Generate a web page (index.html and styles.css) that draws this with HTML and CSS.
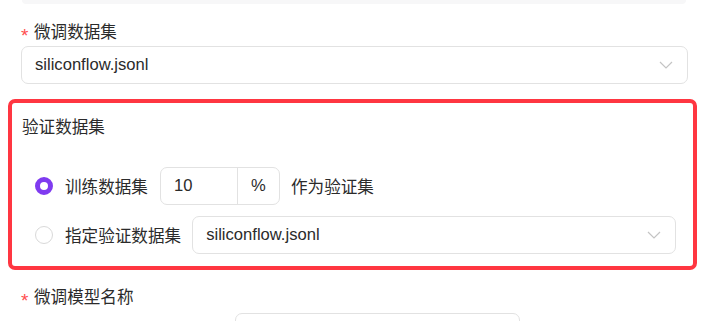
FILE: index.html
```html
<!DOCTYPE html>
<html lang="zh-CN">
<head>
  <meta charset="UTF-8" />
  <meta name="viewport" content="width=device-width, initial-scale=1.0" />
  <title>微调</title>
  <link rel="stylesheet" href="styles.css">
</head>
<body>
  <div class="top-strip"></div>

  <div class="field">
    <div class="label"><span class="req">*</span>微调数据集</div>
    <div class="select">
      <span>siliconflow.jsonl</span>
      <svg class="chev" width="14" height="8" viewBox="0 0 14 8"><polyline points="1,1 7,7 13,1" fill="none" stroke="#c4c4c4" stroke-width="1.2"/></svg>
    </div>
  </div>

  <div class="mark">
    <div class="label plain">验证数据集</div>
    <div class="row first">
      <span class="radio checked"></span>
      <span class="opt">训练数据集</span>
      <div class="group">
        <span class="num">10</span>
        <span class="unit">%</span>
      </div>
      <span class="opt after">作为验证集</span>
    </div>
    <div class="row">
      <span class="radio"></span>
      <span class="opt">指定验证数据集</span>
      <div class="select grow">
        <span>siliconflow.jsonl</span>
        <svg class="chev" width="14" height="8" viewBox="0 0 14 8"><polyline points="1,1 7,7 13,1" fill="none" stroke="#c4c4c4" stroke-width="1.2"/></svg>
      </div>
    </div>
  </div>

  <div class="field">
    <div class="label lower"><span class="req">*</span>微调模型名称</div>
    <div class="name-input"></div>
  </div>
</body>
</html>
```

FILE: styles.css
```css
body {
  margin: 0;
  height: 321px;
  background: #fff;
  color: #2b2b2b;
  font-family: "Liberation Sans", "Noto Sans CJK SC", sans-serif;
  font-size: 16.6px;
  overflow: hidden;
}
.top-strip {
  height: 4px;
  margin: 0 22px;
  background: #f7f7f8;
  border-radius: 0 0 8px 8px;
}
.field {
  padding: 0 20px 0 21px;
}
.label {
  margin-top: 17px;
  height: 24px;
  line-height: 24px;
  display: flex;
  align-items: center;
}
.label.lower {
  margin-top: 16px;
}
.req {
  color: #ff4d4f;
  width: 13px;
  font-size: 19px;
  padding-top: 5px;
}
.select {
  margin-top: 1px;
  height: 38px;
  box-sizing: border-box;
  border: 1px solid #e2e2e2;
  border-radius: 7px;
  display: flex;
  align-items: center;
  justify-content: space-between;
  padding: 0 14px 0 13px;
}
.chev {
  display: block;
}
.mark {
  margin: 15px 11px 0 8px;
  border: 4px solid #ff3641;
  border-radius: 7px;
  padding: 13px 17px 12px 10px;
}
.label.plain {
  margin-top: 0;
}
.row {
  display: flex;
  align-items: center;
  margin-top: 11px;
  padding-left: 13px;
}
.row.first {
  margin-top: 27px;
}
.radio {
  width: 18px;
  height: 18px;
  box-sizing: border-box;
  border-radius: 50%;
  border: 1px solid #d9d9d9;
  background: #fff;
  flex: none;
}
.radio.checked {
  border: 5px solid #7f3bf0;
}
.opt {
  margin-left: 12px;
}
.opt.after {
  margin-left: 11px;
}
.group {
  margin-left: 12px;
  height: 38px;
  width: 120px;
  box-sizing: border-box;
  border: 1px solid #e2e2e2;
  border-radius: 7px;
  display: flex;
}
.num {
  width: 77px;
  border-right: 1px solid #e2e2e2;
  padding-left: 13px;
  box-sizing: border-box;
  line-height: 36px;
}
.unit {
  flex: 1;
  text-align: center;
  line-height: 36px;
}
.select.grow {
  flex: 1;
  margin: 0 0 0 11px;
}
.name-input {
  margin: 3px 0 0 214px;
  width: 285px;
  height: 38px;
  box-sizing: border-box;
  border: 1px solid #e2e2e2;
  border-radius: 7px;
}
```
